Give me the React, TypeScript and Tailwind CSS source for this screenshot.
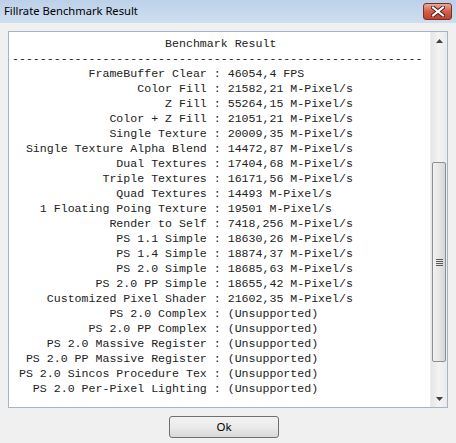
import React from "react";

type Row = [string, string];

const rows: Row[] = [
  ["FrameBuffer Clear", "46054,4 FPS"],
  ["Color Fill", "21582,21 M-Pixel/s"],
  ["Z Fill", "55264,15 M-Pixel/s"],
  ["Color + Z Fill", "21051,21 M-Pixel/s"],
  ["Single Texture", "20009,35 M-Pixel/s"],
  ["Single Texture Alpha Blend", "14472,87 M-Pixel/s"],
  ["Dual Textures", "17404,68 M-Pixel/s"],
  ["Triple Textures", "16171,56 M-Pixel/s"],
  ["Quad Textures", "14493 M-Pixel/s"],
  ["1 Floating Poing Texture", "19501 M-Pixel/s"],
  ["Render to Self", "7418,256 M-Pixel/s"],
  ["PS 1.1 Simple", "18630,26 M-Pixel/s"],
  ["PS 1.4 Simple", "18874,37 M-Pixel/s"],
  ["PS 2.0 Simple", "18685,63 M-Pixel/s"],
  ["PS 2.0 PP Simple", "18655,42 M-Pixel/s"],
  ["Customized Pixel Shader", "21602,35 M-Pixel/s"],
  ["PS 2.0 Complex", "(Unsupported)"],
  ["PS 2.0 PP Complex", "(Unsupported)"],
  ["PS 2.0 Massive Register", "(Unsupported)"],
  ["PS 2.0 PP Massive Register", "(Unsupported)"],
  ["PS 2.0 Sincos Procedure Tex", "(Unsupported)"],
  ["PS 2.0 Per-Pixel Lighting", "(Unsupported)"],
];

// the report is plain text, labels right aligned on the colon
const report = [
  " ".repeat(22) + "Benchmark Result",
  "-".repeat(59),
  ...rows.map(([label, value]) => label.padStart(28) + " : " + value),
].join("\n");

function Arrow({ down }: { down?: boolean }) {
  return (
    <svg width="7" height="4" viewBox="0 0 7 4" className={down ? "rotate-180" : ""}>
      <path d="M3.5 0 L7 4 L0 4 Z" fill="#404040" />
    </svg>
  );
}

function ScrollBar() {
  return (
    <div className="flex w-[17px] flex-col border-l border-[#ececec] bg-gradient-to-r from-[#e6e6e6] via-[#f3f3f3] to-[#ebebeb]">
      <div className="flex h-[17px] items-center justify-center">
        <Arrow />
      </div>
      <div className="flex-1 px-[1px]">
        <div className="mt-[113px] flex h-[200px] items-center justify-center rounded-[2px] border border-[#8e8f8f] bg-gradient-to-r from-[#f1f1f1] via-[#e6e6e6] to-[#d6d6d6]">
          <div className="flex flex-col gap-[1px]">
            <div className="h-[1px] w-[7px] bg-[#5a5a5a]" />
            <div className="h-[1px] w-[7px] bg-[#5a5a5a]" />
            <div className="h-[1px] w-[7px] bg-[#5a5a5a]" />
            <div className="h-[1px] w-[7px] bg-[#5a5a5a]" />
          </div>
        </div>
      </div>
      <div className="flex h-[17px] items-center justify-center">
        <Arrow down />
      </div>
    </div>
  );
}

export default function App() {
  return (
    <div className="flex h-[443px] w-[456px] flex-col bg-[#f0f0f0]">
      <div className="flex h-[23px] items-center justify-between bg-gradient-to-b from-[#bcd1e9] to-[#cfdef0] pl-[4px] pr-[4px]">
        <span className="text-[11.2px] text-black [font-family:'Noto_Sans',sans-serif]">
          Fillrate Benchmark Result
        </span>
        <div className="flex h-[17px] w-[29px] items-center justify-center rounded-[3px] border border-[#7a2f26] bg-gradient-to-b from-[#e9a99b] via-[#d25f4a] to-[#c0412d]">
          <svg width="14" height="11" viewBox="0 0 14 11">
            <path d="M2 1.5 L12 9.5 M12 1.5 L2 9.5" stroke="#4a1d18" strokeWidth="4" strokeLinecap="square" />
            <path d="M2 1.5 L12 9.5 M12 1.5 L2 9.5" stroke="#ffffff" strokeWidth="2" strokeLinecap="square" />
          </svg>
        </div>
      </div>

      <div className="px-2 pt-2">
        <div className="flex h-[377px] border border-[#a6b5c6] bg-white">
          <pre className="flex-1 overflow-hidden pl-[3px] pt-[4px] text-[11.6px] leading-[15px] text-[#222] [font-family:'Liberation_Mono',monospace]">
            {report}
          </pre>
          <ScrollBar />
        </div>
      </div>

      <div className="flex justify-center pr-2 pt-2">
        <button
          type="button"
          className="h-[22px] w-[110px] rounded-[3px] border border-[#707070] bg-gradient-to-b from-[#f2f2f2] via-[#ebebeb] to-[#d8d8d8] text-[11.5px] text-black [font-family:'Noto_Sans',sans-serif]"
        >
          Ok
        </button>
      </div>
    </div>
  );
}
